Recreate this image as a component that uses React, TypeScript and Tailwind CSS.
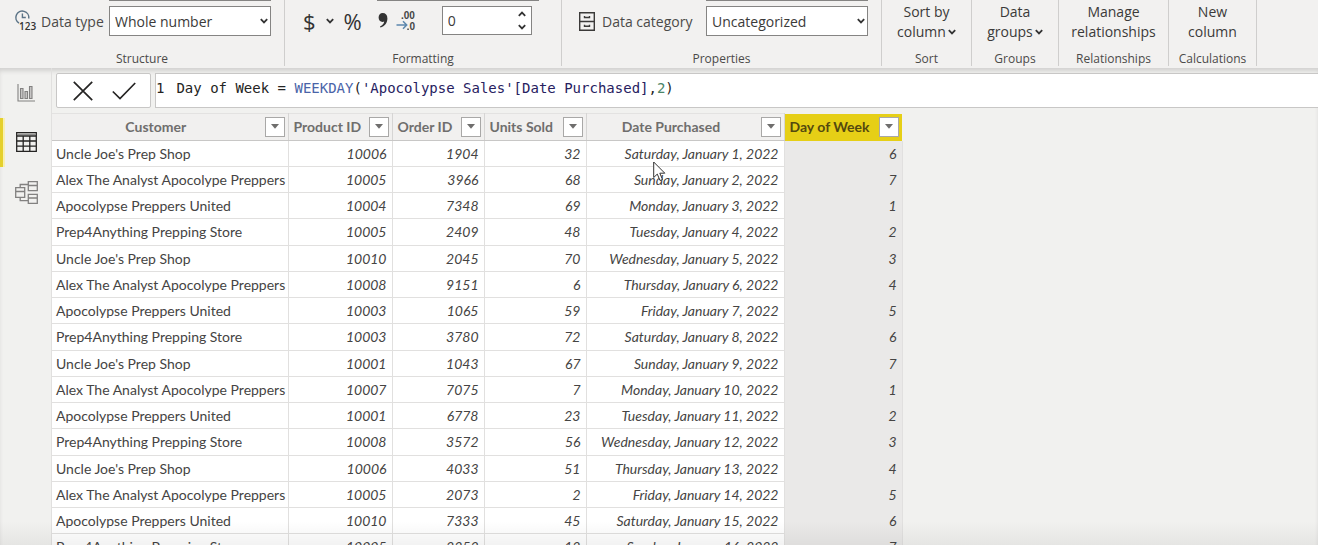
import type { ReactNode } from "react";

const customers = [
  "Uncle Joe's Prep Shop",
  "Alex The Analyst Apocolype Preppers",
  "Apocolypse Preppers United",
  "Prep4Anything Prepping Store",
];

const rows: [number, number, number, string, number][] = [
  [10006, 1904, 32, "Saturday, January 1, 2022", 6],
  [10005, 3966, 68, "Sunday, January 2, 2022", 7],
  [10004, 7348, 69, "Monday, January 3, 2022", 1],
  [10005, 2409, 48, "Tuesday, January 4, 2022", 2],
  [10010, 2045, 70, "Wednesday, January 5, 2022", 3],
  [10008, 9151, 6, "Thursday, January 6, 2022", 4],
  [10003, 1065, 59, "Friday, January 7, 2022", 5],
  [10003, 3780, 72, "Saturday, January 8, 2022", 6],
  [10001, 1043, 67, "Sunday, January 9, 2022", 7],
  [10007, 7075, 7, "Monday, January 10, 2022", 1],
  [10001, 6778, 23, "Tuesday, January 11, 2022", 2],
  [10008, 3572, 56, "Wednesday, January 12, 2022", 3],
  [10006, 4033, 51, "Thursday, January 13, 2022", 4],
  [10005, 2073, 2, "Friday, January 14, 2022", 5],
  [10010, 7333, 45, "Saturday, January 15, 2022", 6],
  [10005, 2252, 12, "Sunday, January 16, 2022", 7],
];

const columns = [
  { name: "Customer", width: "w-[236px]" },
  { name: "Product ID", width: "w-[104px]" },
  { name: "Order ID", width: "w-[92px]" },
  { name: "Units Sold", width: "w-[102px]" },
  { name: "Date Purchased", width: "w-[198px]" },
  { name: "Day of Week", width: "w-[118px]" },
];

function Chevron({ up = false }: { up?: boolean }) {
  return (
    <svg width="8" height="6" viewBox="0 0 8 6" fill="none" stroke="#333" strokeWidth="1.8" aria-hidden="true">
      <path d={up ? "M0.8 4.8 4 1.6 7.2 4.8" : "M0.8 1.2 4 4.4 7.2 1.2"} />
    </svg>
  );
}

function Group({ label, width, children }: { label: string; width: string; children: ReactNode }) {
  return (
    <section aria-label={label} className={`flex shrink-0 flex-col border-r border-[#cfcecd] ${width}`}>
      <div className="h-[52px]">{children}</div>
      <div className="text-center text-xs leading-[14px] text-[#4b4a49]">{label}</div>
    </section>
  );
}

function Select({ id, value }: { id: string; value: string }) {
  return (
    <div className="relative">
      <select
        id={id}
        className="block h-[30px] w-[162px] appearance-none border border-[#858483] bg-white pt-[2px] pl-[5px] text-sm text-[#3b3a39]"
      >
        <option>{value}</option>
      </select>
      <span className="pointer-events-none absolute top-3 right-[3px]">
        <Chevron />
      </span>
    </div>
  );
}

function RibbonButton({ top, bottom, menu = false }: { top: string; bottom: string; menu?: boolean }) {
  return (
    <button type="button" className="flex w-full flex-col items-center pt-[2px] text-sm leading-5 text-[#3b3a39]">
      <span>{top}</span>
      <span className="flex items-center gap-[2px]">
        {bottom}
        {menu && <Chevron />}
      </span>
    </button>
  );
}

function Ribbon() {
  return (
    <header className="flex h-[68px] shrink-0 overflow-hidden bg-[#f2f1f0] pb-[2px]">
      <Group label="Structure" width="w-[285px]">
        <div className="flex justify-end pr-[13px]">
          <div className="h-px w-[162px] bg-[#858483]" />
        </div>
        <div className="flex items-center pt-[5px] pl-[13px]">
          <svg width="24" height="26" viewBox="0 0 24 26" fill="none" aria-hidden="true">
            <path d="M6 15.200A6.500 6.500 0 1 1 15.800 10.500" stroke="#5b7386" strokeWidth="1.500" />
            <path d="M9.400 5.500v4h3.400" stroke="#5b7386" strokeWidth="1.400" />
            <text x="6" y="21.500" fontSize="10" fontWeight="600" fontFamily="Open Sans" fill="#333">
              123
            </text>
          </svg>
          <label htmlFor="data-type" className="flex-1 pt-[2px] pl-1 text-sm whitespace-nowrap">
            Data type
          </label>
          <div className="pr-[13px]">
            <Select id="data-type" value="Whole number" />
          </div>
        </div>
      </Group>
      <Group label="Formatting" width="w-[277px]">
        <div className="flex justify-end pr-[22px]">
          <div className="h-px w-[162px] bg-[#858483]" />
        </div>
        <div className="flex items-center pt-[5px] pl-[18px]">
          <button type="button" aria-label="Currency format" className="flex items-center gap-2.5 text-[22px] leading-7 text-[#333]">
            $
            <Chevron />
          </button>
          <button type="button" aria-label="Percentage format" className="ml-2.5 text-[22px] leading-7 text-[#333]">
            %
          </button>
          <button type="button" aria-label="Thousands separator" className="ml-4">
            <svg width="10" height="18" viewBox="0 0 10 18" aria-hidden="true">
              <path d="M4.600 1C7.600 1 9.400 3 9.400 6.400c0 4.400-2.600 7.800-7 9.200L2 14.600c2.600-1.200 4-2.900 4.200-5C5.700 9.800 5.200 9.900 4.600 9.900 2.200 9.900.600 8 .600 5.500.600 2.900 2.300 1 4.600 1Z" fill="#333" />
            </svg>
          </button>
          <button type="button" aria-label="Decimal places" className="ml-2">
            <svg width="22" height="28" viewBox="0 0 22 28" aria-hidden="true">
              <text x="5" y="12" fontSize="10" fontWeight="700" fontFamily="Liberation Sans" fill="#444">.00</text>
              <text x="13.500" y="23" fontSize="10" fontWeight="700" fontFamily="Liberation Sans" fill="#444">0</text>
              <path d="M.500 18h10M7 14.300l3.700 3.700L7 21.700" fill="none" stroke="#5c87ad" strokeWidth="1.500" />
              <path d="M11.300 22.200h1.500" stroke="#444" strokeWidth="1.500" />
            </svg>
          </button>
          <div className="ml-6 flex h-[29px] w-[90px] border border-[#858483] bg-white">
            <input aria-label="Decimal places value" defaultValue="0" className="w-0 flex-1 bg-transparent pl-[5px] text-sm text-[#3b3a39]" />
            <div className="flex w-[13px] flex-col justify-between py-[4px]">
              <button type="button" aria-label="Increase" className="flex"><Chevron up /></button>
              <button type="button" aria-label="Decrease" className="flex"><Chevron /></button>
            </div>
          </div>
        </div>
      </Group>
      <Group label="Properties" width="w-[320px]">
        <div className="flex justify-end pr-[13px]">
          <div className="h-px w-[162px] bg-[#858483]" />
        </div>
        <div className="flex items-center pt-[5px] pl-[17px]">
          <svg width="16" height="19" viewBox="0 0 16 19" fill="none" stroke="#3b3a39" strokeWidth="1.400" aria-hidden="true">
            <path d="M.700.700h14.600v17.600H.700zM.700 9.500h14.600M5.500 4v1.500h5V4M5.500 12.800v1.500h5v-1.500" />
          </svg>
          <label htmlFor="data-category" className="flex-1 pt-[2px] pl-[7px] text-sm">
            Data category
          </label>
          <div className="pr-[13px]">
            <Select id="data-category" value="Uncategorized" />
          </div>
        </div>
      </Group>
      <Group label="Sort" width="w-[90px]">
        <RibbonButton top="Sort by" bottom="column" menu />
      </Group>
      <Group label="Groups" width="w-[87px]">
        <RibbonButton top="Data" bottom="groups" menu />
      </Group>
      <Group label="Relationships" width="w-[110px]">
        <RibbonButton top="Manage" bottom="relationships" />
      </Group>
      <Group label="Calculations" width="w-[88px]">
        <RibbonButton top="New" bottom="column" />
      </Group>
    </header>
  );
}

function Sidebar() {
  return (
    <nav aria-label="Views" className="flex w-[52px] shrink-0 flex-col border-r border-[#e1e0df]">
      <button type="button" aria-label="Report view" className="flex h-[50px] items-center pl-[17px]">
        <svg width="18" height="18" viewBox="0 0 18 18" fill="none" stroke="#828180" strokeWidth="1.100" aria-hidden="true">
          <path d="M1 0v17h17" />
          <path d="M3.500 4.500h2.500v10H3.500zM8 7.500h2.500v7H8zM12.500 2.500H15v12h-2.500z" fill="#c9c8c7" />
        </svg>
      </button>
      <button
        type="button"
        aria-label="Data view"
        aria-pressed="true"
        className="flex h-[49px] items-center border-l-[3px] border-[#e5d02c] pb-[2px] pl-[13px] shadow-[inset_2px_0_0_#f8f0b0]"
      >
        <svg width="21" height="20" viewBox="0 0 21 20" fill="none" stroke="#252423" strokeWidth="1.300" aria-hidden="true">
          <path d="M.700.700h19.600v18.600H.700zM.700 4h19.600M.700 9h19.600M.700 14.200h19.600M7.200 4v15.300M13.800 4v15.300" />
          <path d="M1 2.300h19" stroke="#8a8988" />
        </svg>
      </button>
      <button type="button" aria-label="Model view" className="flex h-[50px] items-center pl-[15px]">
        <svg width="23" height="23" viewBox="0 0 23 23" fill="none" stroke="#828180" strokeWidth="1.300" aria-hidden="true">
          <path d="M.700 6.700h9v9.600h-9zM.700 10.500h9M13.300.700h9v9h-9zM13.300 4.500h9M13.300 13.300h9v9h-9zM13.300 17h9M5.200 6.700V3.500h8.100M5.200 16.300v3.400h8.100" />
        </svg>
      </button>
    </nav>
  );
}

function FormulaBar() {
  return (
    <div className="flex gap-1 pt-[5px] pl-1">
      <div className="flex h-[35px] w-[95px] shrink-0 items-center justify-between rounded-[2px] border border-[#c8c7c6] bg-white pr-[14px] pl-4">
        <button type="button" aria-label="Cancel">
          <svg width="20" height="20" viewBox="0 0 20 20" stroke="#252423" strokeWidth="1.700" aria-hidden="true">
            <path d="M.800.800 19.200 19.200M19.200.800.800 19.200" />
          </svg>
        </button>
        <button type="button" aria-label="Commit">
          <svg width="24" height="18" viewBox="0 0 24 18" fill="none" stroke="#252423" strokeWidth="1.700" aria-hidden="true">
            <path d="M.800 9.500 8 16.500 23.200 1" />
          </svg>
        </button>
      </div>
      <div className="h-[35px] min-w-0 flex-1 overflow-hidden border border-r-0 border-[#c8c7c6] bg-white pt-1 font-['DejaVu_Sans_Mono',monospace] text-sm leading-5 whitespace-pre text-[#252423]">
        <span className="mr-3">1</span>
        <code role="textbox" aria-label="Formula" className="font-['DejaVu_Sans_Mono',monospace]">
          Day of Week = <span className="text-[#4a64a8]">WEEKDAY</span>(
          <span className="text-[#27215f]">'Apocolypse Sales'[Date Purchased]</span>,
          <span className="text-[#4b8567]">2</span>)
        </code>
      </div>
    </div>
  );
}

function DataTable() {
  return (
    <table className="mt-[5px] w-[850px] table-fixed border-collapse font-[Lato,sans-serif] text-sm leading-5 text-[#454443]">
      <thead>
        <tr className="h-[27px]">
          {columns.map((c, i) => (
            <th
              key={c.name}
              scope="col"
              className={`p-0 pb-px font-bold ${c.width} ${
                i === 5
                  ? "bg-[#e6cf16] text-[#54490f]"
                  : "border-t border-r border-b border-t-[#e3e2e1] border-r-[#d6d5d4] border-b-[#c8c7c6] bg-[#f1f0ef] text-[#6f6e6d]"
              }`}
            >
              <div className="flex items-center pr-[3px] pl-[5px]">
                <span className={`flex-1 whitespace-nowrap ${i === 0 || i === 4 ? "pr-2.5 text-center" : "text-left"}`}>{c.name}</span>
                <button
                  type="button"
                  aria-label={`Filter ${c.name}`}
                  className="flex size-5 items-center justify-center border border-[#a9a8a7] bg-white"
                >
                  <svg width="8" height="5" viewBox="0 0 8 5" aria-hidden="true">
                    <path d="M0 0h8L4 4.800z" fill="#6f6e6d" />
                  </svg>
                </button>
              </div>
            </th>
          ))}
        </tr>
      </thead>
      <tbody>
        {rows.map(([product, order, units, date, day], i) => (
          <tr key={i} className="h-[26px] bg-white italic nth-[4n]:h-[27px]">
            <td className="border-r border-b border-[#e1e0df] p-0 pl-1 whitespace-nowrap not-italic">{customers[i % 4]}</td>
            {[product, order, units, date].map((v, j) => (
              <td key={j} className="border-r border-b border-[#e1e0df] p-0 pr-[5px] text-right whitespace-nowrap">
                {v}
              </td>
            ))}
            <td className="border-r border-[#e1e0df] bg-[#eae9e8] p-0 pr-[5px] text-right">{day}</td>
          </tr>
        ))}
      </tbody>
    </table>
  );
}

export default function App() {
  return (
    <div className="relative flex h-screen flex-col overflow-hidden bg-[#f1f1ef] font-['Open_Sans',sans-serif] text-[#4b4a49]">
      <Ribbon />
      <div className="flex min-h-0 flex-1 shadow-[inset_0_4px_4px_-1px_#d2d1d0]">
        <Sidebar />
        <main className="min-w-0 flex-1">
          <FormulaBar />
          <DataTable />
        </main>
      </div>
      <svg className="pointer-events-none absolute top-[161px] left-[653px]" width="13" height="21" viewBox="0 0 13 21" aria-hidden="true">
        <path d="M.700 1v15.500l3.600-3.400 2.700 6.400 2.500-1-2.700-6.300h5z" fill="#fff" stroke="#333" />
      </svg>
      <div className="pointer-events-none absolute inset-x-0 bottom-0 h-6 bg-linear-to-b from-transparent to-black/5" />
    </div>
  );
}
